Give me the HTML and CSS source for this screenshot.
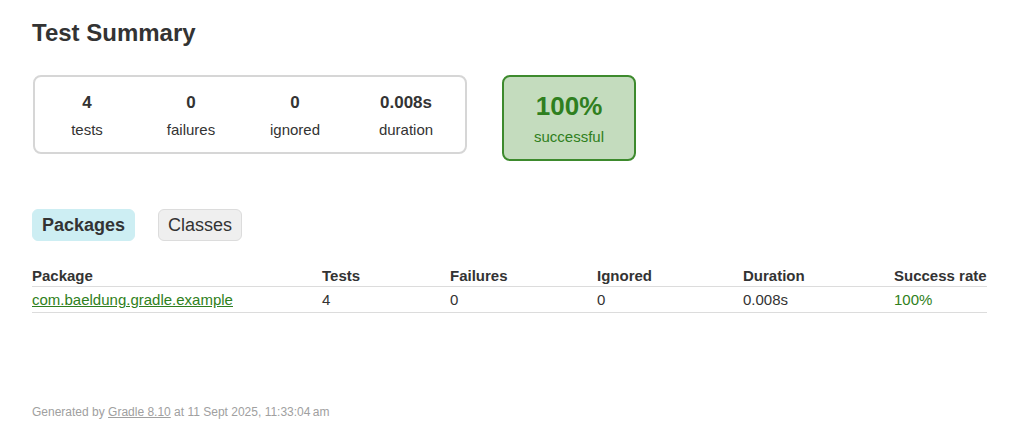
FILE: index.html
```html
<!DOCTYPE html>
<html>
<head>
<meta charset="utf-8">
<title>Test results - Test Summary</title>
<link rel="stylesheet" href="styles.css">
</head>
<body>
<div class="content">
  <h1 class="title">Test Summary</h1>
  <div class="summary">
    <div class="counters">
      <div class="counter"><div class="num">4</div><div class="label">tests</div></div>
      <div class="counter"><div class="num">0</div><div class="label">failures</div></div>
      <div class="counter"><div class="num">0</div><div class="label">ignored</div></div>
      <div class="counter wide"><div class="num">0.008s</div><div class="label">duration</div></div>
    </div>
    <div class="success">
      <div class="percent">100%</div>
      <div class="label">successful</div>
    </div>
  </div>
  <div class="tabs">
    <span class="tab active">Packages</span>
    <span class="tab">Classes</span>
  </div>
  <table class="results">
    <colgroup>
      <col class="c1"><col class="c2"><col class="c3"><col class="c4"><col class="c5"><col class="c6">
    </colgroup>
    <thead>
      <tr><th>Package</th><th>Tests</th><th>Failures</th><th>Ignored</th><th>Duration</th><th>Success rate</th></tr>
    </thead>
    <tbody>
      <tr><td><a class="pkg" href="#">com.baeldung.gradle.example</a></td><td>4</td><td>0</td><td>0</td><td>0.008s</td><td class="ok">100%</td></tr>
    </tbody>
  </table>
  <div class="footer">Generated by <a href="#">Gradle 8.10</a> at 11 Sept 2025, 11:33:04&#8239;am</div>
</div>
</body>
</html>
```
FILE: styles.css
```css
html, body {
  margin: 0;
  padding: 0;
  background: #fff;
}
body {
  font-family: "Liberation Sans", Arial, sans-serif;
  color: #333;
}
.content {
  padding: 17px 37px 0 32px;
}
.title {
  margin: 0;
  font-size: 24px;
  line-height: 32px;
  font-weight: bold;
  color: #333;
}
.summary {
  display: flex;
  align-items: flex-start;
  gap: 35px;
  margin-top: 26px;
  margin-left: 1px;
}
.counters {
  display: flex;
  border: 2px solid #d6d6d6;
  border-radius: 8px;
  box-sizing: border-box;
  height: 79px;
}
.counter {
  width: 104px;
  text-align: center;
  padding-top: 15px;
}
.counter.wide {
  width: 118px;
}
.num {
  font-size: 17px;
  font-weight: bold;
  line-height: 22px;
  color: #333;
}
.label {
  font-size: 15px;
  line-height: 20px;
  margin-top: 6px;
  color: #333;
}
.success {
  width: 134px;
  height: 86px;
  box-sizing: border-box;
  border: 2px solid #3d8a2d;
  border-radius: 8px;
  background: #c4dcbe;
  text-align: center;
  padding-top: 14px;
}
.percent {
  font-size: 26px;
  font-weight: bold;
  line-height: 30px;
  color: #2f7f20;
}
.success .label {
  color: #2f7f20;
  margin-top: 6px;
}
.tabs {
  display: flex;
  gap: 23px;
  margin-top: 48px;
}
.tab {
  font-size: 18px;
  line-height: 30px;
  padding: 0 9px;
  border-radius: 6px;
  border: 1px solid #dcdcdc;
  background: #efefef;
  color: #333;
}
.tab.active {
  font-weight: bold;
  background: #cdeef3;
  border-color: #cdeef3;
}
.results {
  width: 955px;
  border-collapse: collapse;
  margin-top: 22px;
  font-size: 15px;
  table-layout: fixed;
}
.c1 { width: 290px; }
.c2 { width: 128px; }
.c3 { width: 147px; }
.c4 { width: 146px; }
.c5 { width: 151px; }
.c6 { width: 93px; }
.results th {
  text-align: left;
  font-weight: bold;
  padding: 3px 0 0 0;
  line-height: 20px;
  border-bottom: 1px solid #dcdcdc;
  color: #333;
  white-space: nowrap;
}
.results td {
  padding: 2px 0 1px 0;
  line-height: 22px;
  border-bottom: 1px solid #dcdcdc;
  color: #333;
  white-space: nowrap;
}
.results a.pkg {
  color: #2f7f20;
  text-decoration: underline;
}
.results td.ok {
  color: #2f7f20;
}
.footer {
  margin-top: 92px;
  font-size: 12px;
  color: #a0a0a0;
}
.footer a {
  color: #a0a0a0;
  text-decoration: underline;
}
```
